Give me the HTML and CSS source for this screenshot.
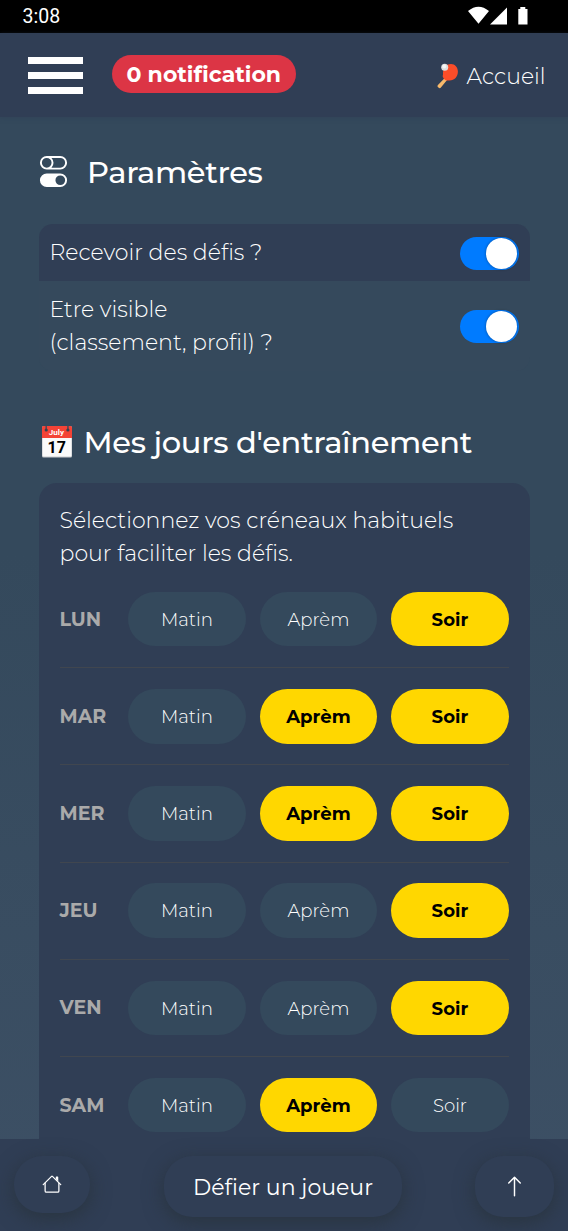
FILE: index.html
```html
<!DOCTYPE html>
<html lang="fr">
<head>
<meta charset="utf-8">
<title>Paramètres</title>
<link rel="stylesheet" href="styles.css">
</head>
<body>
<div class="screen">
  <div class="status">
    <span class="clock">3:08</span>
    <svg class="status-icons" width="62" height="20" viewBox="0 0 62 20">
      <path d="M0 4.500Q10.500-4 21 4.500L10.500 17.300zM39 1v17H22zM50.300 2.500h2V.500h5v2h2.200V18h-9.200z" transform="translate(0 .5)"/>
    </svg>
  </div>
  <header class="topbar">
    <div class="burger"><i></i><i></i><i></i></div>
    <span class="badge">0 notification</span>
    <a class="home">
      <svg class="paddle" width="24" height="28" viewBox="0 0 24 28">
        <path d="M9.300 15.500 1.700 23.300q-.8 1.200.7 2.300 1.400 1.200 2.500 0L11.500 17.500z" fill="#f8b96b"/>
        <path d="M7 12.500c-1 2 .4 3.500 1 4.400 1.500 1.600 3.500 1.800 5.500 1.700 5 0 8.500-4 8.400-9C21.800 5 19 2.200 15 2 9.500 2 6.700 7 7 12.500z" fill="#fb4d29"/>
        <circle cx="8.700" cy="5.200" r="3.500" fill="#dedede"/>
        <circle cx="8.200" cy="4.500" r="2" fill="#f5f5f5"/>
      </svg>
      <span>Accueil</span>
    </a>
  </header>
  <main>
    <h1 class="title">
      <svg class="toggles" width="31" height="31" viewBox="0 0 16 16"><path d="M4.500 9a3.500 3.500 0 1 0 0 7h7a3.500 3.500 0 1 0 0-7h-7zm7 6a2.500 2.500 0 1 1 0-5 2.500 2.500 0 0 1 0 5zm-7-14a2.500 2.500 0 1 0 0 5 2.500 2.500 0 0 0 0-5zm2.450 0A3.490 3.490 0 0 1 8 3.500 3.490 3.490 0 0 1 6.950 6h4.550a2.500 2.500 0 0 0 0-5H6.950zM4.500 0h7a3.500 3.500 0 1 1 0 7h-7a3.500 3.500 0 1 1 0-7z"/></svg>
      <span class="title-settings">Paramètres</span>
    </h1>
    <section class="settings">
      <div class="setting dark"><span>Recevoir des défis ?</span><span class="switch"></span></div>
      <div class="setting tall"><span>Etre visible<br>(classement, profil) ?</span><span class="switch"></span></div>
    </section>
    <h2 class="title second">
      <svg class="calendar" width="30" height="32" viewBox="0 0 30 32">
        <rect width="30" height="31.500" rx="1.500" fill="#c9cccf"/>
        <path d="M.6 11h28.800v18.600q0 1-1 1H1.600q-1 0-1-1z" fill="#fafafa"/>
        <path d="M0 12V1.500Q0 0 1.500 0h27Q30 0 30 1.500V12z" fill="#f44336"/>
        <path d="M3.500 0h1.300v3.200h-1.300zM25.300 0h1.300v3.200h-1.300z" fill="#34495c"/>
        <circle cx="4.200" cy="4" r="1.600" fill="#354150"/><circle cx="25.900" cy="4" r="1.600" fill="#354150"/>
        <text class="cal-month" x="14.400" y="9">July</text>
        <text class="cal-day" x="14.800" y="27.300">17</text>
      </svg>
      <span class="title-days">Mes jours d'entraînement</span>
    </h2>
    <section class="training">
      <p>Sélectionnez vos créneaux habituels<br>pour faciliter les défis.</p>
      <div class="day"><b>LUN</b><span class="slot">Matin</span><span class="slot">Aprèm</span><span class="slot on">Soir</span></div>
      <div class="day"><b>MAR</b><span class="slot">Matin</span><span class="slot on">Aprèm</span><span class="slot on">Soir</span></div>
      <div class="day"><b>MER</b><span class="slot">Matin</span><span class="slot on">Aprèm</span><span class="slot on">Soir</span></div>
      <div class="day"><b>JEU</b><span class="slot">Matin</span><span class="slot">Aprèm</span><span class="slot on">Soir</span></div>
      <div class="day"><b>VEN</b><span class="slot">Matin</span><span class="slot">Aprèm</span><span class="slot on">Soir</span></div>
      <div class="day"><b>SAM</b><span class="slot">Matin</span><span class="slot on">Aprèm</span><span class="slot">Soir</span></div>
    </section>
  </main>
  <footer class="bottom">
    <span class="btn btn-home"><svg width="20" height="20" viewBox="0 0 16 16"><path d="M2 13.500V7h1v6.500a.5.5 0 0 0 .5.5h9a.5.5 0 0 0 .5-.5V7h1v6.500a1.500 1.500 0 0 1-1.500 1.500h-9A1.500 1.500 0 0 1 2 13.500zm11-11V6l-2-2V2.500a.5.5 0 0 1 .5-.5h1a.5.5 0 0 1 .5.5z"/><path d="M7.293 1.500a1 1 0 0 1 1.414 0l6.647 6.646a.5.5 0 0 1-.708.708L8 2.207 1.354 8.854a.5.5 0 1 1-.708-.708L7.293 1.500z"/></svg></span>
    <span class="btn btn-play">Défier un joueur</span>
    <span class="btn btn-up"><svg width="23" height="23" viewBox="0 0 16 16"><path d="M8 15a.5.5 0 0 0 .5-.5V2.707l3.146 3.147a.5.5 0 0 0 .708-.708l-4-4a.5.5 0 0 0-.708 0l-4 4a.5.5 0 1 0 .708.708L7.500 2.707V14.500a.5.5 0 0 0 .5.5z"/></svg></span>
  </footer>
</div>
</body>
</html>
```

FILE: styles.css
```css
* { box-sizing: border-box; }
body { margin: 0; font-family: Montserrat, Inter, sans-serif; color: #fff; }
svg { display: block; flex: none; fill: #fff; }
span { white-space: nowrap; }

.screen {
  width: 568px;
  height: 1231px;
  overflow: hidden;
  display: flex;
  flex-direction: column;
  background: linear-gradient(#34495c 0, #34495c 45%, #3d5065 100%);
}

.status {
  flex: none;
  height: 33px;
  display: flex;
  align-items: center;
  justify-content: space-between;
  padding: 0 38px 0 22.5px;
  background: #000;
}
.clock { font: 400 19.5px/33px Roboto, sans-serif; }
.status-icons { margin-bottom: 1px; }

.topbar {
  flex: none;
  height: 84px;
  display: flex;
  align-items: flex-start;
  padding: 22px 22.5px 0 28px;
  background: #303e55;
  box-shadow: 0 1px 4px rgba(48, 62, 85, .5);
}
.burger { width: 55px; padding-top: 2px; display: grid; gap: 8px; }
.burger i { height: 7px; background: #fff; }
.badge {
  width: 183.5px;
  height: 38px;
  margin-left: 29px;
  border-radius: 19px;
  background: #dc3545;
  text-align: center;
  font-weight: 700;
  font-size: 22px;
  line-height: 40px;
}
.home { margin-left: auto; padding-top: 7px; display: flex; gap: 7px; font-size: 22px; font-weight: 300; line-height: 30px; }

main { flex: 1; min-height: 0; overflow: hidden; padding: 31px 38px 0 39px; }
.title { margin: 0; height: 46px; display: flex; align-items: center; font-size: 30.5px; font-weight: 500; line-height: 46px; letter-spacing: -.33px; }
.toggles { margin-left: -1px; }
.title-settings { margin-left: 18px; padding-top: 1px; }
.calendar { margin-left: 3px; }
.title-days { margin-left: 11.5px; }
.cal-month { font: 700 8px Roboto, sans-serif; letter-spacing: 0; text-anchor: middle; }
.cal-day { font: 700 16px Roboto, sans-serif; letter-spacing: 0; text-anchor: middle; fill: #000; }

.settings { margin-top: 30px; border-radius: 14px; overflow: hidden; background: #35495c; }
.setting { height: 57px; display: flex; align-items: center; justify-content: space-between; padding: 0 11.5px 0 10.5px; font-size: 22.05px; font-weight: 300; line-height: 33px; }
.dark { background: #303e55; }
.dark .switch { margin-top: 1px; }
.tall { height: 90px; }
.switch { width: 58.5px; height: 33px; padding: 1px; border-radius: 17px; background: #007bff; }
.switch::after { content: ""; display: block; width: 31px; height: 31px; margin-left: 25px; border-radius: 50%; background: #fff; box-shadow: 0 0 3px rgba(0, 0, 0, .4); }

.second { margin-top: 48px; }
.training { margin-top: 18px; height: 800px; padding: 21px 21px 0 20.5px; border-radius: 18px; background: #303e55; }
.training p { margin: 0 0 1px; font-size: 22.05px; font-weight: 300; line-height: 33px; }
.day {
  height: 97.2px;
  display: grid;
  grid-template-columns: 54.7px repeat(3, 117.5px);
  column-gap: 14px;
  align-items: center;
  border-bottom: 1px solid #40464f;
}
.day b { color: #aaa; font-size: 19px; font-weight: 700; }
.slot { height: 54.6px; border-radius: 27.5px; background: #34495c; text-align: center; font-size: 18.1px; line-height: 55.6px; font-weight: 300; }
.slot.on { background: #ffd700; color: #000; font-weight: 700; }

.bottom {
  flex: none;
  height: 92px;
  display: flex;
  align-items: flex-start;
  justify-content: space-between;
  padding: 17px 14px 0;
  background: #303e55;
}
.btn { height: 61px; display: flex; align-items: center; justify-content: center; border-radius: 28px; background: #303e55; box-shadow: 0 5px 20px rgba(38, 48, 54, .7); }
.btn-home { width: 76px; height: 57px; padding-bottom: 2px; }
.btn-play { width: 238px; padding: 1px 0 0 1px; font-size: 22.05px; font-weight: 400; }
.btn-up { width: 79px; padding-bottom: 1px; }
```
